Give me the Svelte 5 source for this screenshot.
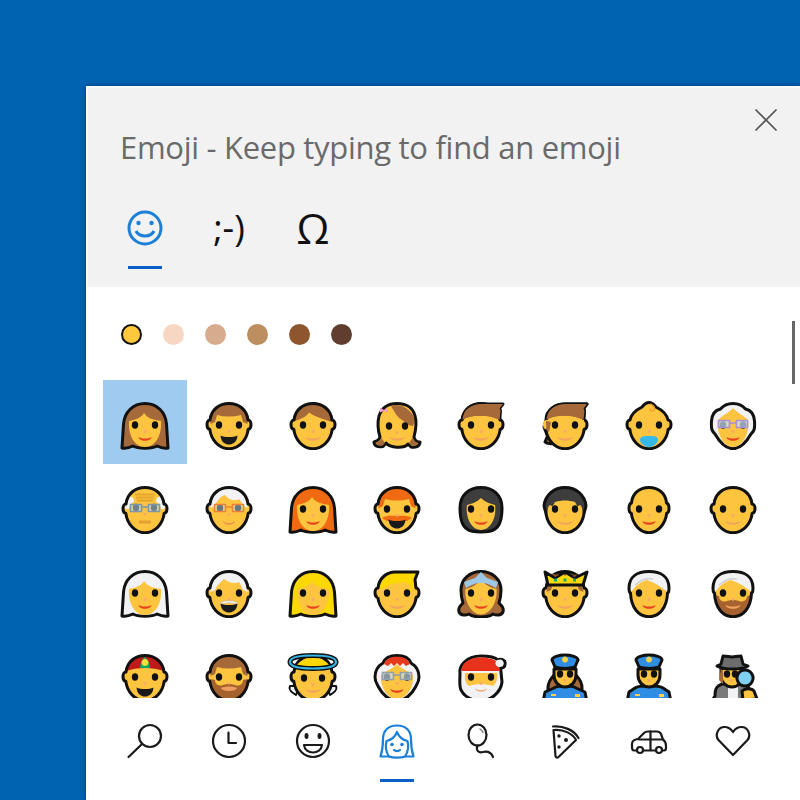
<script lang="ts">
  const SKIN = '#fcc43f';
  const BROWN = '#a5693a';
  const RED = '#ef6a10';
  const DARK = '#3d3d3d';
  const WHITE = '#f2f2f4';
  const BLOND = '#fbd800';
  const INK = '#111';

  const p = (d, f = 'none', st = 'none', w = 0) => ({ d, f, st, w });
  const o = (d, f = SKIN) => p(d, f, INK, 3);
  const line = (d) => p(d, 'none', INK, 3);

  // shared shapes, all drawn in a 56x56 box
  const HEAD = 'M28 9.5C38 9.5 46 16 47 26C49 26 50 28.5 50 30.5C50 33 49 35 47.2 35.2C46 46 38 54.7 28 54.7C18 54.7 10 46 8.8 35.2C7 35 6 33 6 30.5C6 28.5 7 26 9 26C10 16 18 9.5 28 9.5Z';
  const BALD = 'M28 9.5C38 9.5 45 16 45.5 25C47 25.5 48 28 48 30.5C48 33 47 35 45.7 35.2C44.5 46 37 54.7 28 54.7C19 54.7 11.5 46 10.3 35.2C9 35 8 33 8 30.5C8 28 9 25.5 10.5 25C11 16 18 9.5 28 9.5Z';
  const LONG = 'M28 9.5C16 9.5 7.5 18 6.5 30L5 54C9 55 13 53.5 16 52C21 55 35 55 40 52C43 53.5 47 55 51 54L49.5 30C48.5 18 40 9.5 28 9.5Z';
  const LONG_FACE = 'M27 19C31 25 38 26 44 27C45 42 38 53 28 53C18 53 11 42 12 27C18 26 24 24 27 19Z';
  const ROUND_BOB = 'M28 9.5C16 9.5 7 17 7 30C7 40 9 48 14 51C19 55 37 55 42 51C47 48 49 40 49 30C49 17 40 9.5 28 9.5Z';
  const CAP = 'M28 10C19 10 11 16 9.5 25L9.5 30L14 28L16 21C24 23 32 23 40 21L42 28L46.5 30L46.5 25C45 16 37 10 28 10Z';
  const BOY = 'M28 10C19 10 11 16 9.5 27C17 25 22 22 24 18.5C30 23 38 24.5 46.5 28C45 16 37 10 28 10Z';
  const QUIFF = 'M9.5 26C10 15 19 10 28 10L50 10L46.5 14.5L47.5 16.5L46.5 26C38 21 18 20 9.5 26Z';
  const QUIFF_TOP = 'M9.5 26C10 15 19 10 28 10L50 10L46.5 14.5L47.5 16.5L46.8 26';
  const SIDES = 'M9 26C9 15 19 10 28 10L50 10L46.5 14.5L47.5 16.5L46.5 26L14 28L14 38L18 49C15 50 10 50 8 48L10.5 42L7 33Z';
  const BEARD = 'M9 33L14 34C14 38 17 40 21 39.5C25 37.5 31 37.5 35 39.5C39 40 42 38 42 34L47 33C46 45 38 54 28 54C18 54 10 45 9 33Z';
  const TURBAN = 'M28 9.5C16 9.5 8 15 8 26C8 28 9 30 11 29C14 24 21 19 26 18C32 20 41 25 45 29C47 30 48 28 48 26C48 15 40 9.5 28 9.5Z';
  const TURBAN_HEAD = 'M28 9.5C16 9.5 8 15 8 26C8 29 8.5 31 9.5 31C10 46 18 54.7 28 54.7C38 54.7 46 46 46.5 31C47.5 31 48 29 48 26C48 15 40 9.5 28 9.5Z';
  const GLASSES = 'M13.5 26.5H24.5V33.5H13.5ZM31.5 26.5H42.5V33.5H31.5ZM24.5 29H31.5';

  const em = (under, mouth = 'smile', over = [], eyes = [18, 38, 31]) => ({ under, mouth, over, eyes });
  const head = p(HEAD, SKIN);
  const rim = line(HEAD);
  const longHair = (c) => [o(LONG, c), p(LONG_FACE, SKIN)];
  const glasses = (c) => p(GLASSES, 'rgba(190,225,240,.55)', c, 1.6);
  const turban = (extra = []) => [p(TURBAN_HEAD, SKIN), ...extra, p(TURBAN, WHITE), line(TURBAN_HEAD)];
  const fold = p('M14 23C20 18 24 16 32 17', 'none', '#cdd0d6', 1.6);

  const rows = [
    // row 1
    em(longHair(BROWN), 'red'),
    em([head, p(CAP, BROWN), rim], 'open'),
    em([head, p(BOY, BROWN), rim]),
    em([
      o('M28 9.5C20 9.5 13 13 10 22C8 30 9.5 38 11 43C10 47 7 47 5 48C5 52 9 53.5 14 52.5L17 49C21 54 35 55 39 50L42 53C47 54 51 52 51 48C49 48 46 47 45 43C47 35 48 28 46 22C44 13 36 9.5 28 9.5Z', SKIN),
      p('M22 12C27 9.5 38 11 44.5 22C45.5 26 45 30 44 32C39 32 36 28 33 26C29 24 26 19 22 12Z', BROWN),
      p('M6.5 49C9 48.5 11 47 12.5 44L16 49L13.5 51.5C10 52 8 51 6.5 49ZM49.5 49C47 48.5 45 47 43.5 44L40 49L42.5 51.5C46 52 48 51 49.5 49Z', BROWN),
      p('M11 13.5L15 16L19 13.5L19 18.5L15 17L11 18.5Z', '#f39ad2')
    ], 'smile', [], [20, 36, 32]),
    em([head, p(QUIFF, BROWN), rim, line(QUIFF_TOP), p(QUIFF, BROWN)]),
    em([o(SIDES, BROWN), p(HEAD, SKIN), p(QUIFF, BROWN), line('M8.8 35.2C10 46 18 54.7 28 54.7C38 54.7 46 46 47.2 35.2C49 35 50 33 50 30.5C50 28.5 49 26 47 26'), line(QUIFF_TOP), p(QUIFF, BROWN), p('M9 27C9 32 10 33 8.8 35.2L12 38L14 28Z', BROWN)]),
    em([
      o('M28 8.5C31 8.5 33 10.5 35 13C41 16 46 21 47 26C49 26 50 28.5 50 30.5C50 33 49 35 47.2 35.2C46 46 38 54.7 28 54.7C18 54.7 10 46 8.8 35.2C7 35 6 33 6 30.5C6 28.5 7 26 9 26C10 21 15 16 21 13C23 10.5 25 8.5 28 8.5Z'),
      p('M29 10C34 11 35 16 31.5 17C29.5 17.3 28.5 15.5 30 14.5', 'none', '#f39a22', 1.2)
    ], 'none', [
      p('M19 46C19 42 23 42 28 42C33 42 37 42 37 46C37 49 32 53.3 28 53.3C24 53.3 19 49 19 46Z', '#36b9e8')
    ]),
    em([
      o('M28 9.5C22 9.5 18 12 15.5 15C11 16 7 19 6.5 27C6 36 7 37 10 40C14 47 20 54.7 28 54.7C36 54.7 42 47 46 40C49 37 50 36 49.5 27C49 19 45 16 40.5 15C38 12 34 9.5 28 9.5Z', WHITE),
      p('M28 14C31 18 38 21 43 26C45 40 37 53 28 53C19 53 11 40 13 26C18 21 25 18 28 14Z', SKIN)
    ], 'red', [p(GLASSES, 'rgba(200,225,250,.7)', '#a98fd8', 1.6)]),
    // row 2
    em([
      head,
      p('M8.5 31C7 26 8 21 13 19C16 18 17 22 17 24C14 25 13 27 12 31ZM47.5 31C49 26 48 21 43 19C40 18 39 22 39 24C42 25 43 27 44 31Z', WHITE),
      p('M18 16.5H38M19 19.5H37M20 22.5H36', 'none', '#e5a52e', 2),
      rim
    ], 'none', [
      glasses('#7a98a8'),
      p('M22 44H34', 'none', '#e5a033', 3)
    ], [19, 37, 29.5]),
    em([
      head,
      p('M28 10C19 10 11 16 9.5 25L9.5 30L14 28C16 22 20 18 24 17C27 21 33 24 38 21C40 23 41 26 42 28L46.5 30L46.5 25C45 16 37 10 28 10Z', WHITE),
      rim
    ], 'none', [
      p(GLASSES, 'rgba(190,225,240,.5)', '#ef7f34', 1.5),
      p('M22 43C25 46 31 46 34 43C33 48 23 48 22 43Z', '#ef8a4a')
    ], [19, 37, 30]),
    em(longHair(RED), 'red'),
    em([head, p(CAP, RED), p('M13 40C18 37 24 38 28 38C32 38 38 37 43 40L38 43L18 43Z', RED), rim], 'open'),
    em([o(ROUND_BOB, DARK), p('M28 20C32 24 38 26 42 27C44 40 37 52 28 52C19 52 12 40 14 27C18 26 24 24 28 20Z', SKIN)], 'red'),
    em([
      o('M28 9.5C17 9.5 8 17 7 28L8.8 35L10 40C13 49 20 54.7 28 54.7C36 54.7 43 49 46 40L47.2 35L49 28C48 17 39 9.5 28 9.5Z', DARK),
      p('M11 38C10 32 11 28 13 27L15.5 28.5L18 24C25 22 31 22 38 24L40.5 28.5L43 27C45 28 46 32 45 38C42.5 48 35 53.3 28 53.3C21 53.3 13.5 48 11 38Z', SKIN)
    ]),
    em([o(BALD)], 'red'),
    em([o(HEAD)]),
    // row 3
    em(longHair(WHITE), 'red'),
    em([head, p('M28 10C19 10 11 16 9.5 25L9.5 30L14 28C16 23 20 20 23 17C28 21 34 22 38 20C40 23 41 26 42 28L46.5 30L46.5 25C45 16 37 10 28 10Z', WHITE), rim], 'open', [
      p('M19 41C23 38 33 38 37 41C33 42 31 41.5 28 40.5C25 41.5 23 42 19 41Z', WHITE, '#999', .3)
    ]),
    em(longHair(BLOND), 'red'),
    em([head, p('M10 26C10 17 18 11 26 11L47.5 11L44.5 17.5C45 21 45 24 45.5 27.5L42 26.5C41 23 39 21 36 20C29 21 18 22 13 27.5Z', BLOND),
      line('M8.8 35.2C10 46 18 54.7 28 54.7C38 54.7 46 46 47.2 35.2C49 35 50 33 50 30.5C50 28.5 49 26 47 26L46 17.5L49 10H26C18 10 10 16 9 26C7 26 6 28.5 6 30.5C6 33 7 35 8.8 35.2')]),
    em([
      o('M28 9.5C17 9.5 8 17 8 28C8 34 9 38 10 41C7 44 5 46 6 50C8 54 13 53.5 16 52C21 56 35 56 40 52C43 53.5 48 54 50 50C51 46 49 44 46 41C47 38 48 34 48 28C48 17 39 9.5 28 9.5Z', BROWN),
      p('M12.5 27C18 26 22 23 25 21H31C34 23 38 26 43.5 27C45 40 37 52.5 28 52.5C19 52.5 11 40 12.5 27Z', SKIN),
      p('M28 10L34 16L45 20L43 26C36 22 33 21 28 21C23 21 20 22 13 26L11 20L22 16Z', '#9cc8e6')
    ], 'red'),
    em([
      o(HEAD),
      p('M10 28C11 24 12 23 13 21H43C44 23 45 24 46 28L46.5 30L42 28L40 22H16L14 28L9.5 30Z', BROWN),
      o('M8 10L18 16L28 10L38 16L50 10L46 23H11Z', '#fdd90c'),
      p('M14 11.5L18 15L22 13ZM26 12H30L28 14ZM35 14L41 11.5L38 15Z', '#8a4f27')
    ], 'smile', [
      p('M17 16.5h3v3h-3zM26.5 16.5h3v3h-3zM36 16.5h3v3h-3z', '#18a860')
    ]),
    em(turban(), 'red', [fold]),
    em(turban([p(BEARD, '#a5612e')]), 'smile', [fold]),
    // row 4
    em([
      head,
      p('M9.5 25C10 14 19 10 28 10C37 10 46 14 46.5 25C37 21 19 21 9.5 25Z', '#bd1a1a'),
      p('M28 10.5C31 14 33 18 33 22H23C23 18 25 14 28 10.5Z', '#14a860'),
      p('M28 13a3.5 3.5 0 1 0 .01 0Z', '#f6e13b'),
      rim
    ], 'open'),
    em([
      head,
      p(CAP, BROWN),
      p(BEARD, '#a5612e'),
      p('M20 42C24 40 32 40 36 42C35 46 21 46 20 42Z', '#ec9f60'),
      rim
    ], 'none'),
    em([
      p('M8 47C5 45 4 42 5 40L10 40L13 44L11 49ZM48 47C51 45 52 42 51 40L46 40L43 44L45 49Z', WHITE, INK, 2),
      o(HEAD),
      p('M10 23C11 17 19 12 28 12C37 12 45 17 46 23C36 19 20 19 10 23Z', BLOND),
      p('M28 9.5C17 9.5 5 11 5 16C5 21 17 22.5 28 22.5C39 22.5 51 21 51 16C51 11 39 9.5 28 9.5Z', 'none', INK, 5),
      p('M28 9.5C17 9.5 5 11 5 16C5 21 17 22.5 28 22.5C39 22.5 51 21 51 16C51 11 39 9.5 28 9.5Z', 'none', '#35b4e6', 2.2)
    ], 'smile', [], [19, 37, 32]),
    em([
      o('M28 9.5C20 9.5 16 12 14 17C9 20 6 25 6 31C6 36 8 38 9.5 41C13 48 20 54.7 28 54.7C36 54.7 43 48 46.5 41C48 38 50 36 50 31C50 25 47 20 42 17C40 12 36 9.5 28 9.5Z', WHITE),
      p('M28 10.8C21 10.8 17 13 15 18L19 20L22 17L25 20L28 17L31 20L34 17L37 20L41 18C39 13 35 10.8 28 10.8Z', '#e63a1e'),
      p('M28 18C31 22 38 24 44 29C45 42 37 53 28 53C19 53 11 42 12 29C18 24 25 22 28 18Z', SKIN)
    ], 'red', [p(GLASSES, 'rgba(200,225,240,.65)', '#8fa0a8', 1.6)]),
    em([
      o('M7 27C6 21 12 10 28 10C36 10 42 11 45 14C48 12 53 14 52 18C52 22 48 23 47.5 21L49 36C48 46 38 54.7 28 54.7C18 54.7 11 50 8 44C6 40 7 34 7 27Z', WHITE),
      p('M8.5 25C8 19 14 11.5 28 11.5C35 11.5 41 13 44.5 16L47 25Z', '#e8321c'),
      p('M12 27H44C45 33 43 38 40 40C34 37.5 22 37.5 16 40C13 38 11 33 12 27Z', SKIN),
      p('M44 14a4 4 0 1 0 4 -.5', WHITE)
    ], 'none', [p('M22 42C25 45 31 45 34 42C33 47 23 47 22 42Z', '#f2a878')], [18, 38, 31]),
    em([
      o('M11 50V42C11 34 15 32 18 28V22H38V28C41 32 45 34 45 42V50Z', BROWN),
      o('M17 42C21 39 35 39 39 42L48 46L50 56H6L8 46Z', '#2f8ee4'),
      o('M17 23H39V29C39 36 34 41 28 41C22 41 17 36 17 29Z'),
      o('M15 14C15 11 22 9 28 9C34 9 41 11 41 14L38 21C33 23 23 23 18 21Z', '#2f8ee4'),
      p('M28 10.5a3 3 0 1 0 .01 0Z', '#fcd23f')
    ], 'none', [
      p('M38 48h5v3h-5zM14 48h5v2h-5z', '#fcd23f')
    ], [23, 33, 28]),
    em([
      o('M14 42C18 39 38 39 42 42L48 46L50 56H6L8 46Z', '#2f8ee4'),
      o('M17 23H39V29C39 36 34 41 28 41C22 41 17 36 17 29Z'),
      o('M15 14C15 11 22 9 28 9C34 9 41 11 41 14L38 21C33 23 23 23 18 21Z', '#2f8ee4'),
      p('M28 10.5a3 3 0 1 0 .01 0Z', '#fcd23f')
    ], 'none', [
      p('M38 48h5v3h-5zM14 48h5v2h-5z', '#fcd23f')
    ], [23, 33, 28]),
    em([
      o('M10 50C10 42 12 40 17 38L39 38C44 40 46 44 46 56H6Z', '#7a7a7a'),
      p('M23 40H33V56H23Z', WHITE),
      o('M16 22H38V30C38 36 33 41 27 41C21 41 16 36 16 30Z'),
      p('M16 22L14 34L18 38L18 26ZM38 22L40 34L36 38L36 26Z', BROWN),
      o('M12 20C14 19 15 19 16 18L18 10C22 10 24 11 27 11C30 11 32 10 36 10L38 18C39 19 41 19 43 20C36 24 19 24 12 20Z', '#6d6d6d'),
      o('M40 24a8 8 0 1 0 .01 0Z', '#7fd0f2'),
      o('M37 45C40 42 47 42 49 45L52 53L38 54Z', SKIN)
    ], 'none', [], [22, 30, 28])
  ];

  const mouths = {
    red: ['M21.5 43C25 45 31 45 34.5 43C34 48 22 48 21.5 43Z', '#e8401f'],
    smile: ['M20.5 43C25 45 31 45 35.5 43C34.5 48 21.5 48 20.5 43Z', '#f3a35f'],
    open: ['M19.5 41.5C24 43.5 32 43.5 36.5 41.5C36 48 32 50.5 28 50.5C24 50.5 20 48 19.5 41.5Z', '#1a1a1a']
  };

  const tones = ['#ffc83d', '#f7d7c4', '#d6ab8e', '#bd8e5f', '#8e562e', '#613d30'];
</script>

<div class="window">
  <header class="top">
    <button class="close" aria-label="Close">
      <svg width="24" height="24" viewBox="0 0 24 24"><path d="M1.5 1.5L22.5 22.5M22.5 1.5L1.5 22.5" /></svg>
    </button>
    <h1>Emoji - Keep typing to find an emoji</h1>
    <div class="tabs">
      <div class="tab on">
        <svg width="36" height="36" viewBox="0 0 36 36" class="smile">
          <circle cx="18" cy="18" r="16" />
          <circle class="dot" cx="11.5" cy="13" r="2.2" />
          <circle class="dot" cx="24.5" cy="13" r="2.2" />
          <path d="M9 21C12 27.5 24 27.5 27 21" />
        </svg>
      </div>
      <div class="tab kaomoji"><span>;-)</span></div>
      <div class="tab symbol"><span>Ω</span></div>
    </div>
  </header>

  <section class="content">
    <div class="tones">
      {#each tones as c, i}
        <span class="tone" class:picked={i === 0} style="background:{c}"></span>
      {/each}
    </div>
    <div class="scroll"></div>
    <div class="viewport">
      <div class="grid">
        {#each rows as e, i}
          <div class="cell" class:sel={i === 0}>
            <svg width="56" height="56" viewBox="0 0 56 56">
              {#each e.under as l}
                <path d={l.d} fill={l.f} stroke={l.st} stroke-width={l.w} stroke-linejoin="round" />
              {/each}
              <ellipse cx={e.eyes[0]} cy={e.eyes[2]} rx="3.2" ry="3.7" fill="#111" />
              <ellipse cx={e.eyes[1]} cy={e.eyes[2]} rx="3.2" ry="3.7" fill="#111" />
              <path d="M{(e.eyes[0] + e.eyes[1]) / 2 - 2} {e.eyes[2] + 5.5}h4l-2 3z" fill="#f5a56c" />
              {#if mouths[e.mouth]}
                <path d={mouths[e.mouth][0]} fill={mouths[e.mouth][1]} />
              {/if}
              {#each e.over as l}
                <path d={l.d} fill={l.f} stroke={l.st} stroke-width={l.w} stroke-linejoin="round" />
              {/each}
            </svg>
          </div>
        {/each}
      </div>
    </div>
  </section>

  <nav class="cats">
    <div class="cat">
      <svg viewBox="0 0 40 40"><circle cx="25" cy="15" r="11" /><path d="M17 23L3.5 36" /></svg>
    </div>
    <div class="cat">
      <svg viewBox="0 0 40 40"><circle cx="20" cy="20" r="16" /><path d="M19.5 11.5V22H27" /></svg>
    </div>
    <div class="cat">
      <svg viewBox="0 0 40 40">
        <circle cx="20" cy="20" r="16" />
        <ellipse class="fill" cx="13.5" cy="15" rx="2" ry="3" />
        <ellipse class="fill" cx="26.5" cy="15" rx="2" ry="3" />
        <path d="M11 24H29C28 34 12 34 11 24Z" />
      </svg>
    </div>
    <div class="cat active">
      <svg viewBox="0 0 40 40">
        <path d="M20 4.5C11 4.5 6 10 6 18C6 25 5 31 3.5 35.5H12M20 4.5C29 4.5 34 10 34 18C34 25 35 31 36.5 35.5H28" />
        <path d="M12 35.5C9 31 8 26 9.5 20C14 19 18 16 20 11C22 16 26 19 30.5 20C32 26 31 31 28 35.5C24 37 16 37 12 35.5Z" />
        <circle class="fill" cx="15" cy="23.5" r="1.8" />
        <circle class="fill" cx="25" cy="23.5" r="1.8" />
        <path d="M17 29C18.5 30.5 21.5 30.5 23 29" />
      </svg>
      <span class="bar"></span>
    </div>
    <div class="cat">
      <svg viewBox="0 0 40 40">
        <ellipse cx="16.5" cy="14" rx="9" ry="10.5" />
        <path d="M19 8C20.5 9 21.5 10 22 11.5" class="thin" />
        <path d="M16.5 24.5C14.5 30 18 32 22 31C27 30 30 31 32 36" />
      </svg>
    </div>
    <div class="cat">
      <svg viewBox="0 0 40 40">
        <path d="M8.5 9L10.5 35C11 37 13 37 14 35.5L31 19C28 13 19 8 8.5 9Z" />
        <path d="M8 5.5C18 4.5 29 9 33.5 17" />
        <circle class="fill" cx="14" cy="15" r="1.7" />
        <circle class="fill" cx="21" cy="19" r="2" />
        <circle class="fill" cx="14" cy="26" r="1.7" />
      </svg>
    </div>
    <div class="cat">
      <svg viewBox="0 0 40 40">
        <path d="M8 29.5H5C3.5 29.5 3 28 3 26V23C3 20 5 18.5 9 18L15 12C16 11 17 10.5 19 10.5H28C30 10.5 31 11 32 13L34 18.5C36 20 37 22 37 25V27C37 29 36 29.5 35 29.5H33" />
        <path d="M14 29.5H27M10 18.5H33M21.5 10.5V29.5" />
        <circle cx="11" cy="29" r="3" />
        <circle cx="30" cy="29" r="3" />
      </svg>
    </div>
    <div class="cat">
      <svg viewBox="0 0 40 40">
        <path d="M20 34L5.5 19C1.5 14 5 6 11.5 6C15 6 18 8 20 11C22 8 25 6 28.5 6C35 6 38.5 14 34.5 19Z" />
      </svg>
    </div>
  </nav>
</div>

<style>
  :global(body) {
    background: #0063b1;
    overflow: hidden;
  }

  .window {
    margin: 86px 0 0 86px;
    width: 714px;
    height: 714px;
    background: #fff;
    display: flex;
    flex-direction: column;
    font-family: "Open Sans", "Liberation Sans", sans-serif;
    box-shadow: 0 0 5px rgba(0, 20, 70, 0.6);
  }

  .top {
    position: relative;
    height: 201px;
    flex: none;
    background: #f2f2f2;
    padding: 40px 0 0 34px;
    box-sizing: border-box;
    box-shadow: inset 2px 2px 0 #fafafa;
  }

  .close {
    position: absolute;
    top: 22px;
    right: 22px;
    padding: 0;
    border: 0;
    background: none;
    line-height: 0;
  }

  .close path {
    stroke: #555;
    stroke-width: 1.7;
    fill: none;
  }

  h1 {
    margin: 0;
    font-size: 31px;
    font-weight: 400;
    letter-spacing: -0.29px;
    line-height: 42px;
    color: #6a6a6a;
    white-space: nowrap;
  }

  .tabs {
    display: flex;
    gap: 50px;
    margin: 40px 0 0 8px;
  }

  .tab {
    position: relative;
    width: 34px;
    height: 40px;
    display: flex;
    justify-content: center;
    line-height: 40px;
    color: #111;
    white-space: nowrap;
  }

  .kaomoji {
    font-size: 36px;
  }

  .symbol {
    font-size: 42px;
  }

  .tab.on::after {
    content: "";
    position: absolute;
    left: 0;
    right: 0;
    top: 58px;
    height: 3px;
    background: #0a5ec7;
  }

  .smile {
    flex: none;
    margin-top: 2px;
  }

  .smile circle,
  .smile path {
    fill: none;
    stroke: #1c80d8;
    stroke-width: 3;
  }

  .smile .dot {
    fill: #1c80d8;
    stroke: none;
  }

  .content {
    position: relative;
    flex: 1;
    min-height: 0;
    display: flex;
    flex-direction: column;
  }

  .tones {
    display: flex;
    gap: 21px;
    padding: 37px 0 35px 35px;
    flex: none;
  }

  .tone {
    width: 21px;
    height: 21px;
    border-radius: 50%;
    box-sizing: border-box;
  }

  .tone.picked {
    border: 2px solid #111;
  }

  .scroll {
    position: absolute;
    right: 5px;
    top: 34px;
    width: 3px;
    height: 63px;
    background: #666;
  }

  .viewport {
    flex: 1;
    min-height: 0;
    overflow: hidden;
    padding-left: 17px;
  }

  .grid {
    display: grid;
    grid-template-columns: repeat(8, 84px);
    grid-auto-rows: 84px;
  }

  .cell {
    display: flex;
    align-items: center;
    justify-content: center;
  }

  .cell.sel {
    background: #9fcbf0;
  }

  .cats {
    flex: none;
    height: 102px;
    padding-left: 17px;
    display: grid;
    grid-template-columns: repeat(8, 84px);
  }

  .cat {
    position: relative;
    display: flex;
    justify-content: center;
    padding-top: 23px;
    color: #1a1a1a;
  }

  .cat svg {
    width: 40px;
    height: 40px;
  }

  .cat svg :is(circle, ellipse, path) {
    fill: none;
    stroke: currentColor;
    stroke-width: 2.2;
    stroke-linecap: round;
    stroke-linejoin: round;
  }

  .cat svg .fill {
    fill: currentColor;
    stroke: none;
  }

  .cat svg .thin {
    stroke-width: 1.4;
    stroke: #777;
  }

  .cat.active {
    color: #1c80d8;
  }

  .bar {
    position: absolute;
    left: 25px;
    top: 81px;
    width: 34px;
    height: 3px;
    background: #0a5ec7;
  }
</style>
